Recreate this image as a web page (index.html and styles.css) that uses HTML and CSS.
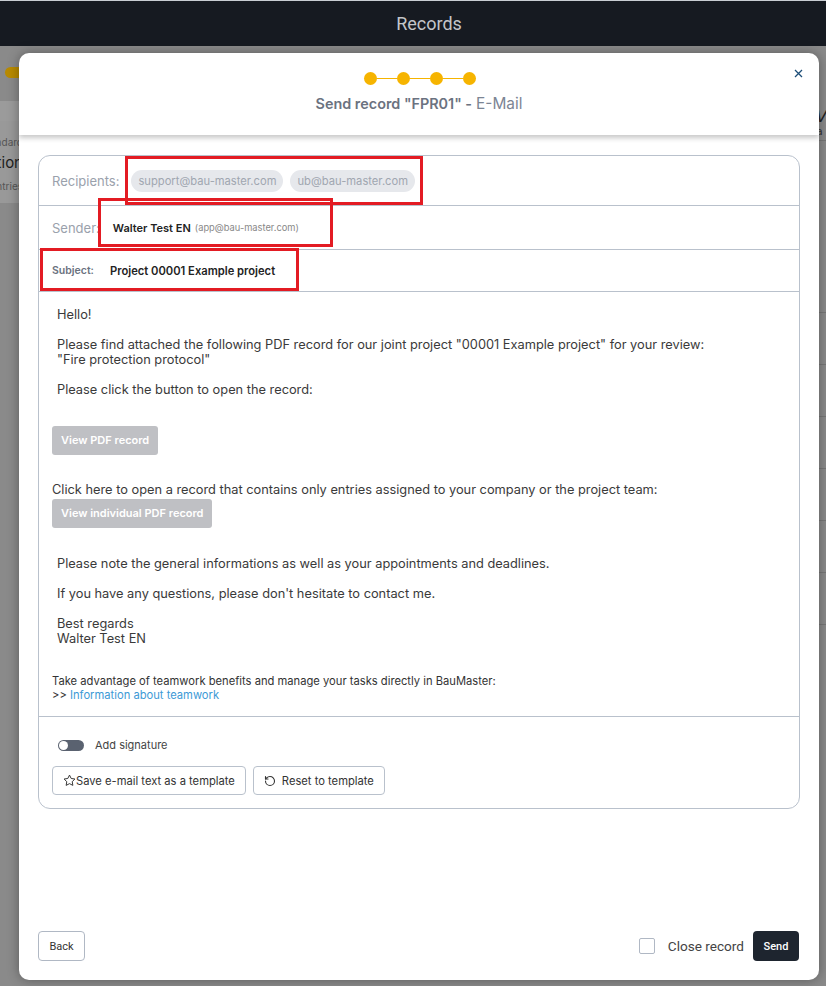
FILE: index.html
```html
<!DOCTYPE html>
<html lang="en">
<head>
  <meta charset="UTF-8">
  <title>Records</title>
  <link rel="stylesheet" href="styles.css">
</head>
<body>
  <header class="topbar">Records</header>

  <div class="page">
    <div class="page-left">
      <span class="pill"></span>
      <div class="band"></div>
      <div class="side-card">
        <div class="crumb"><span>Standard</span></div>
        <div class="side-title"><span>Inspection</span></div>
        <div class="crumb"><span>Entries</span></div>
      </div>
    </div>
    <div class="page-right">
      <div class="glyph">V</div>
      <div class="glyph small">a</div>
      <div class="rows">
        <div></div><div></div><div></div><div></div><div></div><div></div><div></div>
      </div>
    </div>
  </div>

  <div class="modal">
    <div class="modal-head">
      <div class="steps">
        <span class="dot"></span><span class="line"></span>
        <span class="dot"></span><span class="line"></span>
        <span class="dot"></span><span class="line"></span>
        <span class="dot"></span>
      </div>
      <div class="modal-title"><b>Send record "FPR01" -</b> <span>E-Mail</span></div>
      <button class="close" aria-label="Close">
        <svg width="9" height="9" viewBox="0 0 9 9"><path d="M1 1l7 7M8 1L1 8" stroke="#1d4e78" stroke-width="1.3"/></svg>
      </button>
    </div>

    <div class="modal-main">
      <div class="card">
        <div class="row row-recipients">
          <span class="label">Recipients:</span>
          <span class="chip">support@bau-master.com</span>
          <span class="chip">ub@bau-master.com</span>
        </div>
        <div class="row row-sender">
          <span class="label">Sender:</span>
          <span class="sender-name">Walter Test EN</span>
          <span class="sender-mail">(app@bau-master.com)</span>
        </div>
        <div class="row row-subject">
          <span class="subject-label">Subject:</span>
          <span class="subject">Project 00001 Example project</span>
        </div>

        <div class="mail-body">
          <p class="ind">Hello!</p>
          <p class="ind">Please find attached the following PDF record for our joint project "00001 Example project" for your review:<br>"Fire protection protocol"</p>
          <p class="ind">Please click the button to open the record:</p>
          <span class="pdf-btn first">View PDF record</span>
          <p class="click-here">Click here to open a record that contains only entries assigned to your company or the project team:</p>
          <span class="pdf-btn">View individual PDF record</span>
          <p class="ind note">Please note the general informations as well as your appointments and deadlines.</p>
          <p class="ind">If you have any questions, please don't hesitate to contact me.</p>
          <p class="ind">Best regards<br>Walter Test EN</p>
          <p class="teamwork">Take advantage of teamwork benefits and manage your tasks directly in BauMaster:<br>&gt;&gt; <a href="#">Information about teamwork</a></p>
        </div>

        <div class="card-foot">
          <label class="toggle-row"><span class="toggle"></span>Add signature</label>
          <div class="tpl-buttons">
            <button class="outline-btn">
              <svg width="13" height="13" viewBox="0 0 24 24" fill="none" stroke="#333" stroke-width="1.8" stroke-linejoin="round"><path d="M12 2l3.09 6.26L22 9.27l-5 4.87 1.18 6.88L12 17.77l-6.18 3.25L7 14.14 2 9.27l6.91-1.01L12 2z"/></svg>Save e-mail text as a template
            </button>
            <button class="outline-btn reset">
              <svg width="12" height="12" viewBox="0 0 24 24" fill="none" stroke="#333" stroke-width="2.2" stroke-linecap="round" stroke-linejoin="round"><path d="M3 12a9 9 0 1 0 9-9 9.75 9.75 0 0 0-6.74 2.74L3 8"/><path d="M3 3v5h5"/></svg>Reset to template
            </button>
          </div>
        </div>

        <!-- annotation frames from the screenshot -->
        <span class="mark mark-recipients"></span>
        <span class="mark mark-sender"></span>
        <span class="mark mark-subject"></span>
      </div>
    </div>

    <div class="modal-foot">
      <button class="back-btn">Back</button>
      <div class="foot-right">
        <label class="close-record"><span class="checkbox"></span>Close record</label>
        <button class="send-btn">Send</button>
      </div>
    </div>
  </div>
</body>
</html>
```

FILE: styles.css
```css
:root {
  --yellow: #f6b400;
  --border: #b9c1cc;
  --text: #3a3a3a;
  --muted: #9aa1ac;
  --dark: #1e252f;
  --mark: #e31b23;
}

html, body {
  margin: 0;
  padding: 0;
}

body {
  width: 826px;
  height: 986px;
  overflow: hidden;
  position: relative;
  background: #8a8a8a;
  font-family: Inter, "Noto Sans", sans-serif;
  color: var(--text);
}

button {
  font-family: inherit;
  cursor: pointer;
}

/* page behind the dialog */
.topbar {
  height: 46px;
  box-sizing: border-box;
  border-top: 1px solid #c9cdd3;
  padding-left: 32px;
  background: #161a21;
  color: #c3c5c9;
  font: 400 18px Roboto, sans-serif;
  display: flex;
  align-items: center;
  justify-content: center;
}

.page {
  display: flex;
  justify-content: space-between;
}

.page-left {
  width: 19px;
  overflow: hidden;
  padding-top: 21px;
}

.pill {
  display: block;
  width: 40px;
  height: 11px;
  margin-left: 5px;
  border-radius: 6px;
  background: #b88a00;
}

.band {
  height: 20px;
  margin-top: 23px;
  background: #9b9b9b;
}

.side-card {
  background: #999;
  padding: 14px 0 10px;
}

.side-card > div {
  display: flex;
  justify-content: flex-end;
  white-space: nowrap;
  margin-right: -4px;
}

.crumb {
  font-size: 10px;
  color: #555;
  line-height: 14px;
}

.side-title {
  font-size: 15px;
  color: #1e1e1e;
  line-height: 20px;
  margin: 4px 0 6px;
}

.page-right {
  width: 7px;
  overflow: hidden;
  padding-top: 62px;
}

.glyph {
  font: italic 16px "DejaVu Sans", sans-serif;
  color: #222;
  line-height: 18px;
  margin-left: -3px;
}

.glyph.small {
  font: 11px "DejaVu Sans", sans-serif;
  color: #333;
  line-height: 12px;
  border-bottom: 1px solid #777;
  padding-bottom: 2px;
}

.rows {
  padding-top: 120px;
}

.rows div {
  height: 51px;
  border-bottom: 1px solid #777;
}

/* dialog */
.modal {
  position: absolute;
  left: 19px;
  top: 53px;
  width: 800px;
  height: 927px;
  background: #fff;
  border-radius: 10px;
  box-shadow: 0 0 12px rgba(0, 0, 0, 0.35);
  display: flex;
  flex-direction: column;
  overflow: hidden;
}

.modal-head {
  position: relative;
  z-index: 1;
  flex: none;
  height: 82px;
  box-sizing: border-box;
  padding-top: 19px;
  display: flex;
  flex-direction: column;
  align-items: center;
  box-shadow: 0 3px 5px rgba(0, 0, 0, 0.22);
}

.steps {
  display: flex;
  align-items: center;
  margin-left: 1px;
}

.dot {
  width: 13px;
  height: 13px;
  border-radius: 50%;
  background: var(--yellow);
}

.line {
  width: 20px;
  height: 1.5px;
  background: var(--yellow);
}

.modal-title {
  margin-top: 10px;
  font-size: 14.4px;
  line-height: 18px;
  color: #6b7280;
}

.modal-title b {
  font-weight: 600;
}

.modal-title span {
  font-size: 15.4px;
  color: #7c8594;
}

.close {
  position: absolute;
  top: 16px;
  right: 16px;
  border: none;
  background: none;
  padding: 0;
  width: 9px;
  height: 9px;
  display: flex;
}

.modal-main {
  flex: 1;
  padding: 20px 19px 0;
}

.card {
  position: relative;
  border: 1px solid var(--border);
  border-radius: 12px;
}

.row {
  display: flex;
  align-items: center;
  padding: 0 13px;
  border-bottom: 1px solid var(--border);
}

.row-recipients { height: 49px; }
.row-sender { height: 43px; }
.row-subject { height: 41px; }

.label {
  font-size: 13px;
  color: var(--muted);
}

.chip {
  margin-left: 7px;
  padding: 0 7px;
  height: 22px;
  line-height: 22px;
  border-radius: 11px;
  background: #e6e8ec;
  color: #a0a6b0;
  font-size: 11.2px;
}

.row-recipients .label {
  margin-right: 5px;
}

.sender-name {
  margin-left: 13px;
  font-size: 11px;
  font-weight: 600;
  color: #222;
}

.sender-mail {
  margin-left: 4px;
  font-size: 9.3px;
  color: #888;
}

.subject-label {
  font-size: 10.5px;
  font-weight: 600;
  color: #6b7280;
  width: 58px;
}

.subject {
  font-size: 11.2px;
  font-weight: 600;
  color: #222;
}

.mail-body {
  padding: 15px 13px 14px;
  border-bottom: 1px solid var(--border);
  font-size: 12.8px;
  line-height: 15px;
  color: #3a3a3a;
}

.mail-body p {
  margin: 0 0 15px;
}

.mail-body p.ind {
  margin-left: 5px;
}

.pdf-btn {
  display: inline-block;
  height: 29px;
  line-height: 29px;
  padding: 0 9px;
  border-radius: 3px;
  background: #bfc0c4;
  color: #fff;
  font-size: 11px;
  font-weight: 600;
}

.pdf-btn.first {
  margin-top: 14px;
}

.mail-body .click-here {
  margin: 27px 0 2px;
}

.mail-body .note {
  margin-top: 28px;
}

.mail-body .teamwork {
  margin: 28px 0 0;
  font-size: 11.2px;
  line-height: 14px;
  color: #333;
}

.teamwork a {
  color: #3d9ad6;
  text-decoration: none;
}

.card-foot {
  padding: 21px 13px 13px;
}

.toggle-row {
  display: flex;
  align-items: center;
  font-size: 11px;
  color: #444;
  margin-left: 6px;
}

.toggle {
  position: relative;
  width: 26px;
  height: 11px;
  border-radius: 6px;
  background: #5a6270;
  margin-right: 11px;
}

.toggle::before {
  content: "";
  position: absolute;
  left: 1px;
  top: 1px;
  width: 9px;
  height: 9px;
  border-radius: 50%;
  background: #fff;
}

.tpl-buttons {
  display: flex;
  gap: 7px;
  margin-top: 14px;
}

.outline-btn {
  display: flex;
  align-items: center;
  height: 29px;
  padding: 0 10px;
  border: 1px solid var(--border);
  border-radius: 4px;
  background: #fff;
  font-size: 11.2px;
  color: #333;
}

.outline-btn.reset svg {
  margin-right: 6px;
}

.mark {
  position: absolute;
  box-sizing: border-box;
  border: 3px solid var(--mark);
}

.mark-recipients { left: 86px; top: 0; width: 298px; height: 49px; }
.mark-sender { left: 59px; top: 42px; width: 235px; height: 49px; }
.mark-subject { left: 1px; top: 92px; width: 259px; height: 43px; }

.modal-foot {
  flex: none;
  display: flex;
  align-items: center;
  justify-content: space-between;
  padding: 0 20px 19px 19px;
}

.back-btn {
  height: 30px;
  width: 47px;
  padding: 0;
  border: 1px solid #b0b8c4;
  border-radius: 4px;
  background: #fff;
  font: 11px Roboto, sans-serif;
  color: #333;
}

.foot-right {
  display: flex;
  align-items: center;
}

.close-record {
  display: flex;
  align-items: center;
  font: 13.6px Roboto, sans-serif;
  color: #444;
}

.checkbox {
  width: 14px;
  height: 14px;
  border: 1px solid #b0b8c4;
  border-radius: 2px;
  margin-right: 13px;
}

.send-btn {
  margin-left: 9px;
  height: 30px;
  width: 46px;
  padding: 0;
  border: none;
  border-radius: 4px;
  background: var(--dark);
  color: #fff;
  font: 500 11px Roboto, sans-serif;
}
```
